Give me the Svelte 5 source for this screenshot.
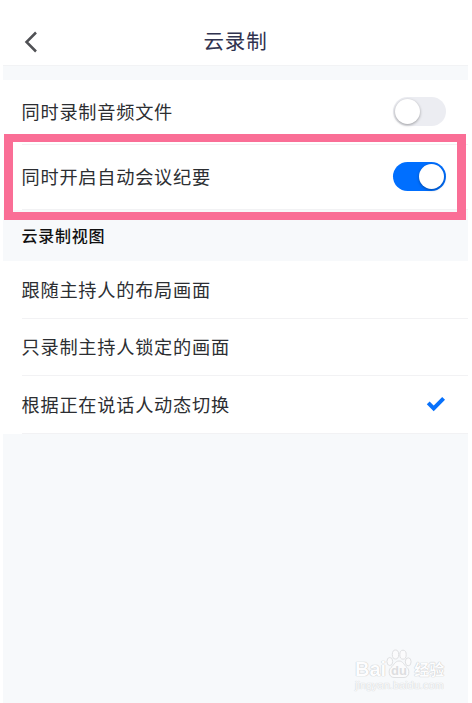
<script>
    let switches = [
        { label: "同时录制音频文件", isOn: false },
        { label: "同时开启自动会议纪要", isOn: true }
    ];

    let views = ["跟随主持人的布局画面", "只录制主持人锁定的画面", "根据正在说话人动态切换"];
    let selected = 2;
</script>

<main>
    <header>
        <button class="back" aria-label="返回">
            <svg width="14" height="22" viewBox="0 0 14 22">
                <path d="M12 1.5 2.5 11 12 20.5" />
            </svg>
        </button>
        <h1>云录制</h1>
    </header>

    <section class="switches">
        {#each switches as item}
            <div class="row">
                <span>{item.label}</span>
                <button
                    class="toggle"
                    class:on={item.isOn}
                    role="switch"
                    aria-checked={item.isOn}
                    aria-label={item.label}
                    on:click={() => item.isOn = !item.isOn}>
                    <i></i>
                </button>
            </div>
        {/each}
        <div class="highlight"></div>
    </section>

    <h2>云录制视图</h2>

    <section class="views">
        {#each views as view, index}
            <button class="row" on:click={() => selected = index}>
                <span>{view}</span>
                {#if selected === index}
                    <svg class="check" width="20" height="16" viewBox="0 0 20 16">
                        <path d="M2.2 6.8 7.7 12.3 17.6 2.4" />
                    </svg>
                {/if}
            </button>
        {/each}
    </section>

    <div class="watermark">
        <div class="brand">
            <b>Bai</b>
            <svg width="26" height="30" viewBox="0 0 26 30">
                <ellipse cx="3.8" cy="12.5" rx="2.9" ry="4" />
                <ellipse cx="9.5" cy="5.5" rx="3.2" ry="4.5" />
                <ellipse cx="17" cy="5.7" rx="3.2" ry="4.5" />
                <ellipse cx="22.2" cy="12.8" rx="2.9" ry="4" />
                <path d="M13 12c-4 0-5 4-8 6.5-3 2.5-2.5 10 3 10h10c5.5 0 6-7.5 3-10-3-2.5-4-6.5-8-6.5Z" />
                <text x="13" y="26" text-anchor="middle">du</text>
            </svg>
            <b class="cn">经验</b>
        </div>
        <div class="site">jingyan.baidu.com</div>
    </div>
</main>

<style>
    :global(body) {
        background: #fff;
    }

    main {
        position: relative;
        box-sizing: border-box;
        width: 465px;
        height: 703px;
        margin-left: 3px;
        background: #f7f9fb;
        color: #2c2e32;
        font-family: "Noto Sans CJK SC", sans-serif;
        overflow: hidden;
    }

    button {
        padding: 0;
        border: 0;
        background: none;
        color: inherit;
        font: inherit;
    }

    header {
        box-sizing: border-box;
        display: grid;
        grid-template-columns: 60px 1fr 60px;
        align-items: center;
        height: 66px;
        padding-top: 18px;
        background: #fff;
        border-bottom: 1px solid #f2f3f5;
    }

    .back {
        display: flex;
        padding-left: 21px;
    }

    .back path {
        fill: none;
        stroke: #505155;
        stroke-width: 2.5;
    }

    h1 {
        margin: 0;
        padding-bottom: 3px;
        color: #30334f;
        font-size: 20.5px;
        font-weight: 400;
        letter-spacing: 0.8px;
        line-height: 30px;
        text-align: center;
    }

    .switches {
        position: relative;
        margin-top: 14px;
        background: #fff;
    }

    .row {
        box-sizing: border-box;
        display: flex;
        align-items: center;
        justify-content: space-between;
        width: 100%;
        height: 57.5px;
        padding: 0 22px 2px 18.5px;
        background: linear-gradient(#f2f2f4, #f2f2f4) 19px 100% / 100% 1px no-repeat;
        font-size: 18.2px;
        letter-spacing: 0.75px;
        line-height: 28px;
        text-align: left;
    }

    .switches .row {
        height: 65px;
        padding-bottom: 3px;
    }

    .toggle {
        display: flex;
        justify-content: flex-start;
        box-sizing: border-box;
        width: 53px;
        height: 29px;
        padding: 2px;
        border-radius: 15px;
        background: #ecedf2;
    }

    .toggle i {
        width: 25px;
        height: 25px;
        border-radius: 50%;
        background: #fff;
        box-shadow: 0 1px 3px rgba(0, 0, 0, 0.35);
    }

    .toggle.on {
        justify-content: flex-end;
        background: #006fff;
    }

    .highlight {
        position: absolute;
        top: 54px;
        left: 1px;
        box-sizing: border-box;
        width: 462px;
        height: 86px;
        border: solid #fa6e96;
        border-width: 8px 9px;
        pointer-events: none;
    }

    h2 {
        box-sizing: border-box;
        height: 51px;
        margin: 0;
        padding: 12px 18.5px 0;
        color: #111;
        font-size: 16px;
        font-weight: 500;
        letter-spacing: 0.75px;
        line-height: 26px;
    }

    .views {
        background: #fff;
    }

    .check path {
        fill: none;
        stroke: #0871fb;
        stroke-width: 4;
    }

    .watermark {
        position: absolute;
        left: 352px;
        top: 648px;
        width: 92px;
        color: #fdfdfe;
        text-shadow: 0 0 1px #c4c5c7, 0 0 1px #c4c5c7;
    }

    .brand {
        display: flex;
        align-items: flex-end;
        height: 31px;
    }

    b {
        font: bold 20px/20px "Liberation Sans", sans-serif;
    }

    .brand .cn {
        margin-left: 2px;
        font: bold 15px/21px "Noto Sans CJK SC", sans-serif;
    }

    .watermark svg {
        flex: none;
        fill: #fbfbfc;
        stroke: #dfe0e2;
        stroke-width: 1;
    }

    .watermark text {
        font: bold 13px "Liberation Sans", sans-serif;
        fill: #dddee0;
        stroke: none;
        text-shadow: none;
    }

    .site {
        font: 11px/12px "Liberation Sans", sans-serif;
        color: #fafbfc;
        text-shadow: 0 0 1px #d2d3d5, 0 0 1px #d2d3d5;
    }
</style>
